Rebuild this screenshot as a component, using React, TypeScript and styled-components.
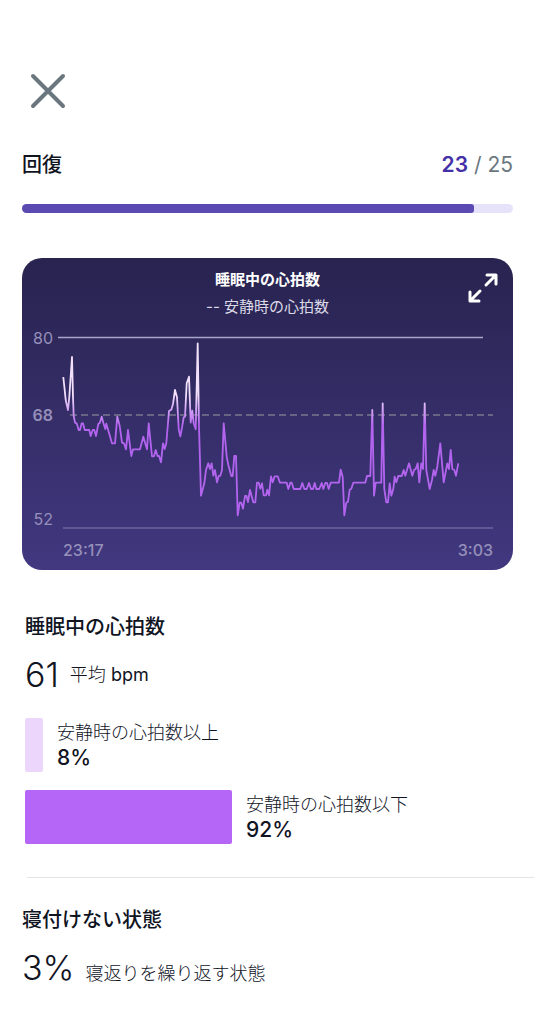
import React from 'react';
import styled, { createGlobalStyle } from 'styled-components';

const GlobalStyle = createGlobalStyle`
  * {
    box-sizing: border-box;
  }

  body {
    margin: 0;
    background: #fff;
    color: #10141f;
    font-family: Inter, 'Noto Sans CJK JP', sans-serif;
  }

  h1,
  h2,
  p {
    margin: 0;
  }
`;

const Page = styled.main`
  padding: 69px 0 32px 22px;
`;

const CloseButton = styled.button`
  display: flex;
  align-items: center;
  justify-content: center;
  width: 44px;
  height: 44px;
  margin-left: 4px;
  padding: 0;
  border: 0;
  background: none;
  color: #6b777f;
  cursor: pointer;
`;

const Summary = styled.section`
  padding-right: 23px;
`;

const ScoreRow = styled.div`
  display: flex;
  align-items: center;
  justify-content: space-between;
  height: 32px;
  margin: 36px 0 23px;
`;

const Title = styled.h2`
  font-size: 20px;
  line-height: 32px;
  font-weight: 500;
`;

const Score = styled.p`
  color: #6b777f;
  font-size: 21px;
  line-height: 32px;

  strong {
    color: #4430a6;
    font-weight: 600;
  }
`;

const Track = styled.div`
  height: 9px;
  border-radius: 5px;
  background: #e6e2fa;
  overflow: hidden;
`;

const Fill = styled.div`
  height: 100%;
  border-radius: 0 3px 3px 0;
  background: #5a4ab2;
`;

const ChartCard = styled.figure`
  position: relative;
  margin: 45px 0 41px;
  padding-top: 8px;
  border-radius: 20px;
  background: linear-gradient(#28234f, #413880);
  color: #fff;
  overflow: hidden;
`;

const ChartTitle = styled.figcaption`
  font-size: 15px;
  line-height: 27px;
  font-weight: 700;
  text-align: center;
`;

const Legend = styled.p`
  color: #dcdae8;
  font-size: 15px;
  line-height: 27px;
  text-align: center;
`;

const ExpandButton = styled.button`
  position: absolute;
  top: 12px;
  right: 12px;
  width: 36px;
  height: 36px;
  padding: 0;
  border: 0;
  background: none;
  color: #fff;
  cursor: pointer;

  svg {
    display: block;
  }
`;

const Plot = styled.svg`
  display: block;
  width: 100%;
  height: auto;

  text {
    fill: #9690ba;
    font-size: 16px;
  }

  .strong {
    font-weight: 600;
  }

  .time {
    font-weight: 500;
  }
`;

const Details = styled.section<{ $inset?: boolean }>`
  padding-left: ${({ $inset }) => ($inset ? 3 : 0)}px;
`;

const Metric = styled.p<{ $gap: number; $align: 'center' | 'baseline' }>`
  display: flex;
  align-items: ${({ $align }) => $align};
  gap: ${({ $gap }) => $gap}px;
  margin-top: 11px;
  font-size: 18px;
  line-height: 42px;
  font-weight: 300;
`;

const MetricValue = styled.span`
  font-size: 34px;
`;

const Unit = styled.span`
  font-weight: 400;
`;

const BarList = styled.div`
  display: grid;
  gap: 18px;
  margin-top: 22px;
`;

const BarRow = styled.div`
  display: flex;
  align-items: center;
  gap: 14px;
  height: 54px;
`;

const Bar = styled.div<{ $color: string }>`
  flex: none;
  height: 100%;
  border-radius: 2px;
  background: ${({ $color }) => $color};
`;

const BarLabel = styled.p`
  font-size: 18px;
  line-height: 25px;
  font-weight: 300;

  strong {
    display: block;
    font-size: 21px;
    font-weight: 500;
  }
`;

const Divider = styled.hr`
  height: 1px;
  margin: 33px 2px 26px 5px;
  border: 0;
  background: #e4e4e7;
`;

const heartRate: [number, number][] = [
  [63.3, 377], [64.7, 390], [65.7, 400], [68, 410], [69.3, 397], [72, 357], [73, 397], [73.7, 416],
  [75, 422.7], [76.7, 423.3], [78.7, 430], [80, 430], [81.7, 423.3], [83, 423.3], [84.7, 430],
  [89.3, 430], [90.7, 436], [92.7, 430], [94.3, 430], [96, 436], [98.3, 424], [99.7, 423],
  [101.7, 416.7], [103.3, 422.7], [105.3, 429], [106.3, 423.7], [112, 443.3], [115, 443.3],
  [117.3, 416.7], [119.7, 426], [122, 442.7], [124, 443.3], [126, 449.3], [128, 430], [131.3, 456],
  [133, 449.3], [140, 449.3], [143.3, 436.7], [147, 449.3], [148.7, 423.3], [152, 456.3],
  [154, 456.3], [155.7, 450], [157.5, 456], [159, 456], [161, 462.3], [163, 443.3], [164.7, 449],
  [166.3, 443.3], [169, 411], [171.3, 409.7], [173, 404], [175, 390], [177, 397.3], [178.7, 429.3],
  [180.3, 436.3], [181.7, 429.3], [183.7, 417.3], [185, 416.7], [186.7, 383.3], [189, 376.7],
  [190.7, 422.7], [192.3, 410.7], [193.7, 423.3], [195.7, 429.3], [197.7, 343.3], [199, 426.7],
  [201, 495.7], [204.3, 483.3], [206, 470], [208.3, 463.3], [210, 469], [211.7, 463.3],
  [213.3, 475.7], [215, 470], [217, 482.3], [218.7, 476], [220.3, 475.7], [222, 470],
  [223.7, 423.3], [226.7, 456.7], [228.3, 465], [231.3, 476], [232.7, 476], [234.3, 456],
  [236, 456], [237.7, 515.3], [239.7, 502.7], [241.3, 502.7], [243, 508.7], [245, 496],
  [246.5, 496], [248, 502], [250, 490], [253.3, 502.3], [255.3, 502.3], [257, 482.7],
  [258.7, 482.7], [260.3, 488.7], [262, 483.3], [263.7, 495.3], [266, 495.3], [267.3, 489.7],
  [269, 495.3], [271, 476.3], [272.7, 482.3], [274.7, 476.3], [277.7, 476.3], [280, 482.7],
  [286.7, 482.7], [288.3, 489], [290.3, 482.7], [291.7, 482.7], [293.7, 489], [300.3, 489],
  [302.3, 483], [304.3, 489], [306.7, 489], [309, 483], [311, 489], [313, 489], [314.7, 483],
  [316.3, 489], [319.3, 489], [321.7, 483], [323.3, 489], [325.3, 483], [327, 483], [328.7, 489],
  [330.7, 482.7], [339, 482.7], [340.7, 469.7], [342.7, 477], [344.3, 515.3], [346.3, 502.7],
  [348, 501.7], [349.7, 489.7], [351.3, 488.7], [353.3, 482.7], [365.3, 482.7], [367, 476],
  [370.3, 476], [372.3, 410], [374, 495.7], [375.7, 482.7], [381.3, 482.7], [382.7, 403.3],
  [384.3, 489], [386.3, 502.3], [388, 502.3], [389.7, 483.3], [391.3, 495.7], [393.3, 489],
  [394.7, 476.7], [396.3, 482.3], [398.3, 476], [401.7, 476], [403.7, 470], [405.3, 475.7],
  [409, 463.3], [412.3, 475.7], [414, 470], [415.7, 469], [417.7, 463.3], [419.3, 482.3],
  [421.3, 463.3], [423, 469], [424.7, 403.3], [426.3, 470], [429.7, 489], [432, 480],
  [433.7, 470], [435.3, 475.7], [437.3, 466.7], [440.3, 443.3], [443.7, 482.3], [447.3, 463.3],
  [449, 469], [450.7, 450], [452.3, 469], [454.3, 470], [456, 475.7], [458.3, 463.3],
];

const bars = [
  { label: '安静時の心拍数以上', value: 8, color: '#ecd6fc' },
  { label: '安静時の心拍数以下', value: 92, color: '#b566f6' },
];

const BAR_SCALE = 2.25;

const HeartRatePlot: React.FC = () => (
  <Plot viewBox="22 320 491 250" role="img" aria-label="睡眠中の心拍数">
    <defs>
      <linearGradient id="rate" gradientUnits="userSpaceOnUse" x1="0" y1="395" x2="0" y2="425">
        <stop offset="0" stopColor="#f3e0fb" />
        <stop offset="1" stopColor="#b364ef" />
      </linearGradient>
    </defs>
    <path d="M58 337.5H483" stroke="#aaa6cb" strokeWidth="1.5" />
    <path d="M70 415H493" stroke="#77788c" strokeWidth="1.5" strokeDasharray="7 4" />
    <path d="M63 528H493" stroke="#6c649f" strokeWidth="1.5" />
    <polyline
      points={heartRate.map((p) => p.join(',')).join(' ')}
      fill="none"
      stroke="url(#rate)"
      strokeWidth="1.8"
      strokeLinejoin="round"
    />
    <text x="53" y="344" textAnchor="end">80</text>
    <text x="53" y="421" textAnchor="end" className="strong">68</text>
    <text x="53" y="525" textAnchor="end">52</text>
    <text x="63" y="556" className="time">23:17</text>
    <text x="493" y="556" textAnchor="end" className="time">3:03</text>
  </Plot>
);

const App: React.FC = () => {
  return (
    <>
      <GlobalStyle />
      <Page>
        <CloseButton aria-label="閉じる">
          <svg width="36" height="36" viewBox="0 0 36 36" fill="none" stroke="currentColor">
            <path d="M3 3 33 33M33 3 3 33" strokeWidth="4" strokeLinecap="round" />
          </svg>
        </CloseButton>

        <Summary>
          <ScoreRow>
            <Title as="h1">回復</Title>
            <Score>
              <strong>23</strong> / 25
            </Score>
          </ScoreRow>
          <Track role="progressbar" aria-label="回復" aria-valuenow={23} aria-valuemax={25}>
            <Fill style={{ width: `${(23 / 25) * 100}%` }} />
          </Track>

          <ChartCard>
            <ChartTitle>睡眠中の心拍数</ChartTitle>
            <Legend>-- 安静時の心拍数</Legend>
            <ExpandButton aria-label="拡大">
              <svg width="36" height="36" viewBox="0 0 36 36" fill="none" stroke="currentColor">
                <path
                  d="M21 15 30 6M22 5H31V14M15 21 6 30M5 22V31H14"
                  strokeWidth="3"
                  strokeLinecap="round"
                  strokeLinejoin="round"
                />
              </svg>
            </ExpandButton>
            <HeartRatePlot />
          </ChartCard>
        </Summary>

        <Details $inset>
          <Title>睡眠中の心拍数</Title>
          <Metric $gap={11} $align="center">
            <MetricValue>61</MetricValue>
            <span>
              平均 <Unit>bpm</Unit>
            </span>
          </Metric>
          <BarList>
            {bars.map(({ label, value, color }) => (
              <BarRow key={label}>
                <Bar $color={color} style={{ width: value * BAR_SCALE }} />
                <BarLabel>
                  {label}
                  <strong>{value}%</strong>
                </BarLabel>
              </BarRow>
            ))}
          </BarList>
        </Details>

        <Divider />

        <Details>
          <Title>寝付けない状態</Title>
          <Metric $gap={11} $align="baseline">
            <MetricValue>3%</MetricValue>
            <span>寝返りを繰り返す状態</span>
          </Metric>
        </Details>
      </Page>
    </>
  );
};

export default App;
